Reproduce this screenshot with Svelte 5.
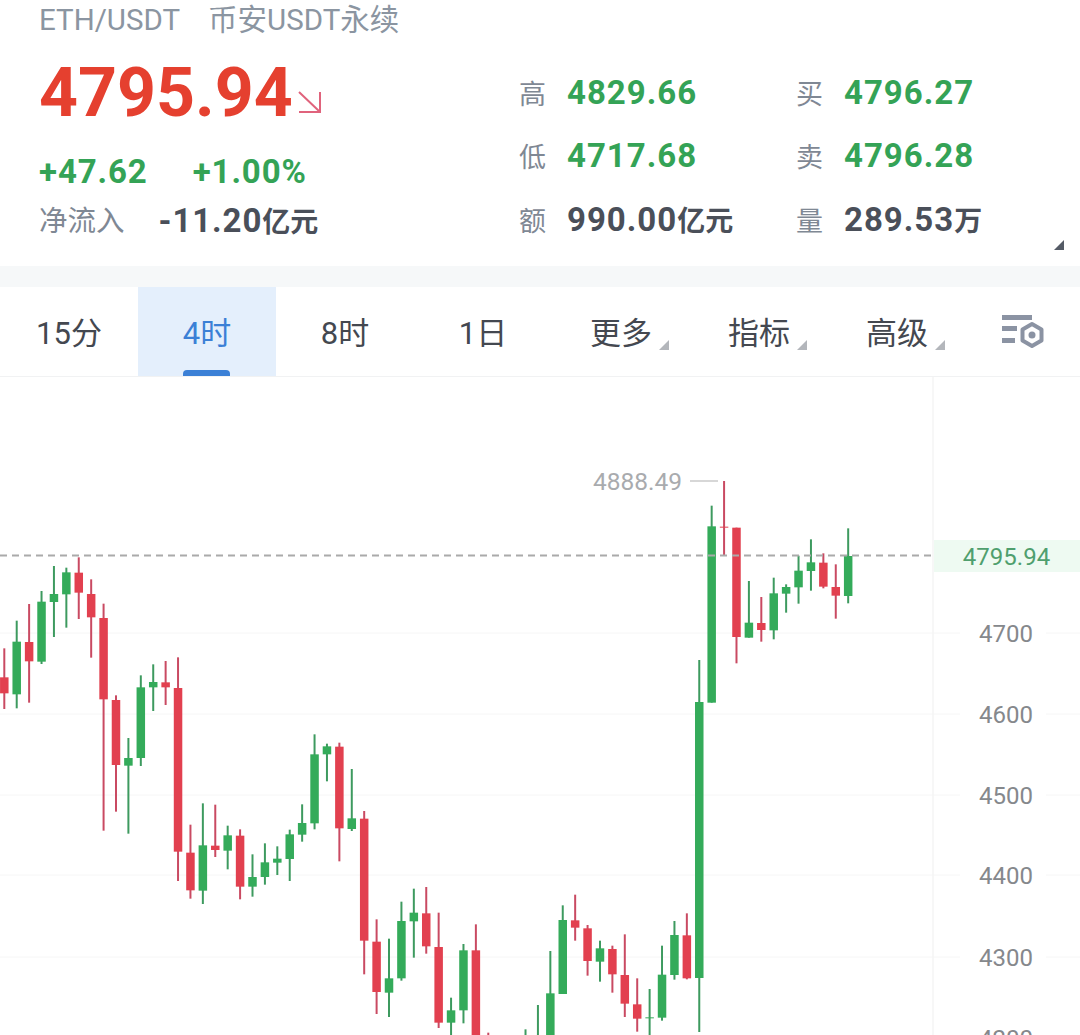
<script>
  const step = 12.41;
  const x0 = 4.3;

  // [index, up, high, bodyTop, bodyBottom, low] in zoomed coords, grouped by crop
  const raw = [
    { oy: 540, k: 3, rows: [
      [0,0,325,412,460,507],[1,1,242,305,463,505],[2,0,192,306,364,488],[3,1,153,185,365,372],
      [4,1,78,162,186,291],[5,1,83,97,163,263],[6,0,52,98,158,237],[7,0,118,162,232,353],
      [8,0,191,234,478,872],[9,0,466,480,675,815],[10,1,594,654,677,881],[11,1,406,442,654,678],
      [12,1,373,426,442,513],[13,0,363,427,442,495],[14,0,352,444,935,1023],[15,0,854,938,1051,1076],
      [16,1,790,916,1052,1092],[17,0,794,917,930,951],[18,1,857,886,932,988],[19,0,868,887,1040,1078],
      [20,1,943,1011,1040,1070],[21,1,910,967,1011,1034],[22,1,919,956,968,1005],[23,1,869,883,957,1023],
      [24,1,793,849,884,905],[25,1,583,643,850,868],[26,1,611,619,643,724],[27,0,608,620,865,964],
      [28,1,687,835,867,873]
    ]},
    { oy: 720, k: 3, rows: [
      [29,0,273,296,662,763],[30,0,598,665,816,882],[31,1,656,775,818,891],[32,1,545,603,775,782],
      [33,1,506,578,604,713],[34,0,501,580,679,701],[35,0,578,681,908,924],[36,1,833,871,908,960],
      [37,1,672,691,871,910],[38,0,613,691,960,960],[39,0,938,960,960,960],[42,1,928,960,960,960],
      [43,1,855,960,960,960],[44,1,693,820,960,960],[45,1,556,600,822,822],[46,0,524,601,623,662],
      [47,0,615,625,723,767],[48,1,662,685,725,785],[49,0,677,687,763,818],[50,0,643,765,851,891],
      [51,0,775,853,896,935],[52,1,807,892,894,960],[53,1,677,764,893,902],[54,1,603,645,765,779],
      [55,0,580,646,775,778]
    ]},
    { oy: 460, k: 3, rows: [
      [57,1,137,199,728,728],[58,0,63,200,203,287],[59,0,203,203,531,610],[60,1,363,488,533,533],
      [61,0,411,489,510,545],[62,1,353,400,511,538],[63,1,373,381,401,458],[64,1,287,332,382,431],
      [65,1,238,307,333,392],[66,0,280,308,380,385],[67,0,313,381,407,476],[68,1,205,288,408,430]
    ]}
  ];

  const candles = raw.flatMap(g => g.rows.map(([i, up, h, t, b, l]) => ({
    x: x0 + step * i,
    up,
    high: g.oy + h / g.k,
    top: g.oy + t / g.k,
    bottom: g.oy + b / g.k,
    low: g.oy + l / g.k
  })));
  candles.push({ x: x0 + step * 56, up: 1, high: 660, top: 702, bottom: 978, low: 1032 });

  const ticks = [
    { y: 633, label: '4700' },
    { y: 714, label: '4600' },
    { y: 795, label: '4500' },
    { y: 875, label: '4400' },
    { y: 957, label: '4300' },
    { y: 1038, label: '4200' }
  ];

  const stats = [
    { k: '高', v: '4829.66', cls: 'up' },
    { k: '买', v: '4796.27', cls: 'up' },
    { k: '低', v: '4717.68', cls: 'up' },
    { k: '卖', v: '4796.28', cls: 'up' },
    { k: '额', v: '990.00', unit: '亿元', cls: 'flat' },
    { k: '量', v: '289.53', unit: '万', cls: 'flat' }
  ];

  const tabs = [
    { label: '15分' },
    { label: '4时', active: true },
    { label: '8时' },
    { label: '1日' },
    { label: '更多', more: true },
    { label: '指标', more: true },
    { label: '高级', more: true }
  ];
</script>

<div class="page">
  <header class="quote">
    <div class="title">
      <span>ETH/USDT</span>
      <span>币安USDT永续</span>
    </div>
    <div class="body">
      <div class="left">
        <div class="price">
          <span>4795.94</span>
          <svg class="arrow" width="26" height="26" viewBox="0 0 26 26" fill="none">
            <path d="M2 3 L23 23 M23 3 V23 H2" stroke="#e0637c" stroke-width="2" />
          </svg>
        </div>
        <div class="change">
          <span>+47.62</span>
          <span>+1.00%</span>
        </div>
        <div class="flow">
          <span class="flow-label">净流入</span>
          <span class="amount">-11.20<small>亿元</small></span>
        </div>
      </div>
      <div class="stats">
        {#each stats as s}
          <div class="stat">
            <span class="label">{s.k}</span>
            <span class="value {s.cls}">{s.v}{#if s.unit}<small>{s.unit}</small>{/if}</span>
          </div>
        {/each}
      </div>
    </div>
    <i class="corner"></i>
  </header>

  <div class="band"></div>

  <nav class="tabs">
    {#each tabs as t}
      <div class="tab" class:active={t.active} class:more={t.more}>
        {t.label}
      </div>
    {/each}
    <div class="settings">
      <svg width="44" height="36" viewBox="0 0 44 36" fill="none">
        <rect x="1" y="1" width="30" height="5" fill="#8b93a3" />
        <rect x="1" y="12" width="15" height="5" fill="#8b93a3" />
        <rect x="1" y="24" width="13" height="5" fill="#8b93a3" />
        <path d="M31 10 L40.500 15.500 V26.500 L31 32 L21.500 26.500 V15.500 Z" stroke="#8b93a3" stroke-width="4" stroke-linejoin="round" />
        <circle cx="31" cy="21" r="3.500" fill="#8b93a3" />
      </svg>
    </div>
  </nav>

  <svg class="chart" width="1080" height="658" viewBox="0 377 1080 658">
    {#each ticks as t}
      <line x1="0" x2="1080" y1={t.y} y2={t.y} stroke="#f6f6f6" stroke-width="1" />
    {/each}
    <line x1="933" x2="933" y1="377" y2="1035" stroke="#f4f4f4" stroke-width="1.500" />

    {#each ticks as t}
      <rect x="960" y={t.y - 14} width="86" height="28" fill="#fff" />
      <text class="axis" x="1006" y={t.y + 9}>{t.label}</text>
    {/each}

    <rect x="934" y="540" width="146" height="32" fill="#eefaf2" />
    <text class="last" x="1006.500" y="565">4795.94</text>

    {#each candles as c}
      <line x1={c.x} x2={c.x} y1={c.high} y2={c.low} class={c.up ? 'wick-up' : 'wick-down'} />
      <rect x={c.x - 4.25} y={c.top} width="8.5" height={Math.max(c.bottom - c.top, 1)} class={c.up ? 'body-up' : 'body-down'} />
    {/each}

    <line x1="0" x2="932" y1="555.500" y2="555.500" stroke="#aaaaaa" stroke-width="2" stroke-dasharray="7 5" />

    <text class="peak" x="682" y="490">4888.49</text>
    <line x1="690" x2="718" y1="481" y2="481" stroke="#bdbdbd" stroke-width="1.200" />
  </svg>
</div>

<style>
  :global(body) {
    background: #fff;
  }

  .page {
    width: 1080px;
    height: 1035px;
    overflow: hidden;
    display: flex;
    flex-direction: column;
    font-family: Roboto, "Noto Sans CJK SC", sans-serif;
  }

  .quote {
    position: relative;
    height: 266px;
    flex: none;
    padding-left: 39px;
    box-sizing: border-box;
  }

  .title {
    display: flex;
    gap: 28px;
    height: 40px;
    font-size: 29.500px;
    line-height: 40px;
    color: #8b95a1;
  }

  .body {
    display: flex;
  }

  .left {
    width: 480px;
    flex: none;
  }

  .price {
    display: flex;
    align-items: flex-end;
    height: 66px;
    margin-top: 20px;
    font-size: 68px;
    line-height: 66px;
    font-weight: 700;
    color: #e5402f;
  }

  .arrow {
    margin: 0 0 11px 4px;
  }

  .change {
    display: flex;
    gap: 45px;
    margin-top: 26px;
    font-size: 33px;
    line-height: 40px;
    font-weight: 700;
    letter-spacing: 0.9px;
    color: #34a356;
  }

  .flow {
    display: flex;
    align-items: center;
    gap: 34px;
    margin-top: 9px;
    line-height: 40px;
  }

  .flow-label {
    font-size: 28.500px;
    color: #7f8894;
  }

  .label {
    font-size: 27px;
    color: #7f8894;
  }

  .amount {
    font-size: 33px;
    font-weight: 700;
    letter-spacing: 0.9px;
    color: #4a4f59;
  }

  small {
    font-size: 28px;
    letter-spacing: 0;
  }

  .stats {
    display: grid;
    grid-template-columns: 277px 277px;
    grid-auto-rows: 63.500px;
    margin-top: 20.500px;
  }

  .stat {
    display: flex;
    align-items: center;
    gap: 21px;
  }

  .value {
    font-size: 33px;
    font-weight: 700;
    letter-spacing: 1px;
  }

  .value.up {
    color: #34a356;
  }

  .value.flat {
    color: #4a4f59;
  }

  .corner {
    position: absolute;
    right: 16px;
    top: 240px;
    width: 0;
    height: 0;
    border-left: 10px solid transparent;
    border-bottom: 10px solid #555b66;
  }

  .band {
    height: 21px;
    flex: none;
    background: #f6f8f9;
  }

  .tabs {
    display: flex;
    height: 90px;
    flex: none;
    box-sizing: border-box;
    border-bottom: 1px solid #f1f2f3;
  }

  .tab {
    position: relative;
    width: 138px;
    flex: none;
    display: flex;
    align-items: center;
    justify-content: center;
    padding-bottom: 2px;
    box-sizing: border-box;
    font-size: 31px;
    color: #444850;
  }

  .tab.active {
    background: #e4effc;
    color: #3b80d6;
  }

  .tab.active::after {
    content: '';
    position: absolute;
    left: 45px;
    bottom: 0;
    width: 47px;
    height: 6px;
    border-radius: 4px 4px 0 0;
    background: #3b80d6;
  }

  .tab.more::after {
    content: '';
    position: absolute;
    right: 21px;
    top: 53px;
    width: 0;
    height: 0;
    border-left: 10px solid transparent;
    border-bottom: 10px solid #b3b6bb;
  }

  .settings {
    flex: 1;
    display: flex;
    padding: 27px 0 0 35px;
    box-sizing: border-box;
  }

  .chart {
    display: block;
    flex: none;
  }

  .axis,
  .last,
  .peak {
    font-family: Roboto, sans-serif;
    font-size: 24px;
  }

  .axis {
    fill: #85888c;
    text-anchor: middle;
  }

  .last {
    fill: #4f9f6e;
    text-anchor: middle;
  }

  .peak {
    fill: #a9abae;
    text-anchor: end;
    font-size: 24.500px;
  }

  .wick-up {
    stroke: #3d9a5f;
    stroke-width: 2;
  }

  .wick-down {
    stroke: #c94a62;
    stroke-width: 2;
  }

  .body-up {
    fill: #34ab5a;
  }

  .body-down {
    fill: #e2404f;
  }
</style>
